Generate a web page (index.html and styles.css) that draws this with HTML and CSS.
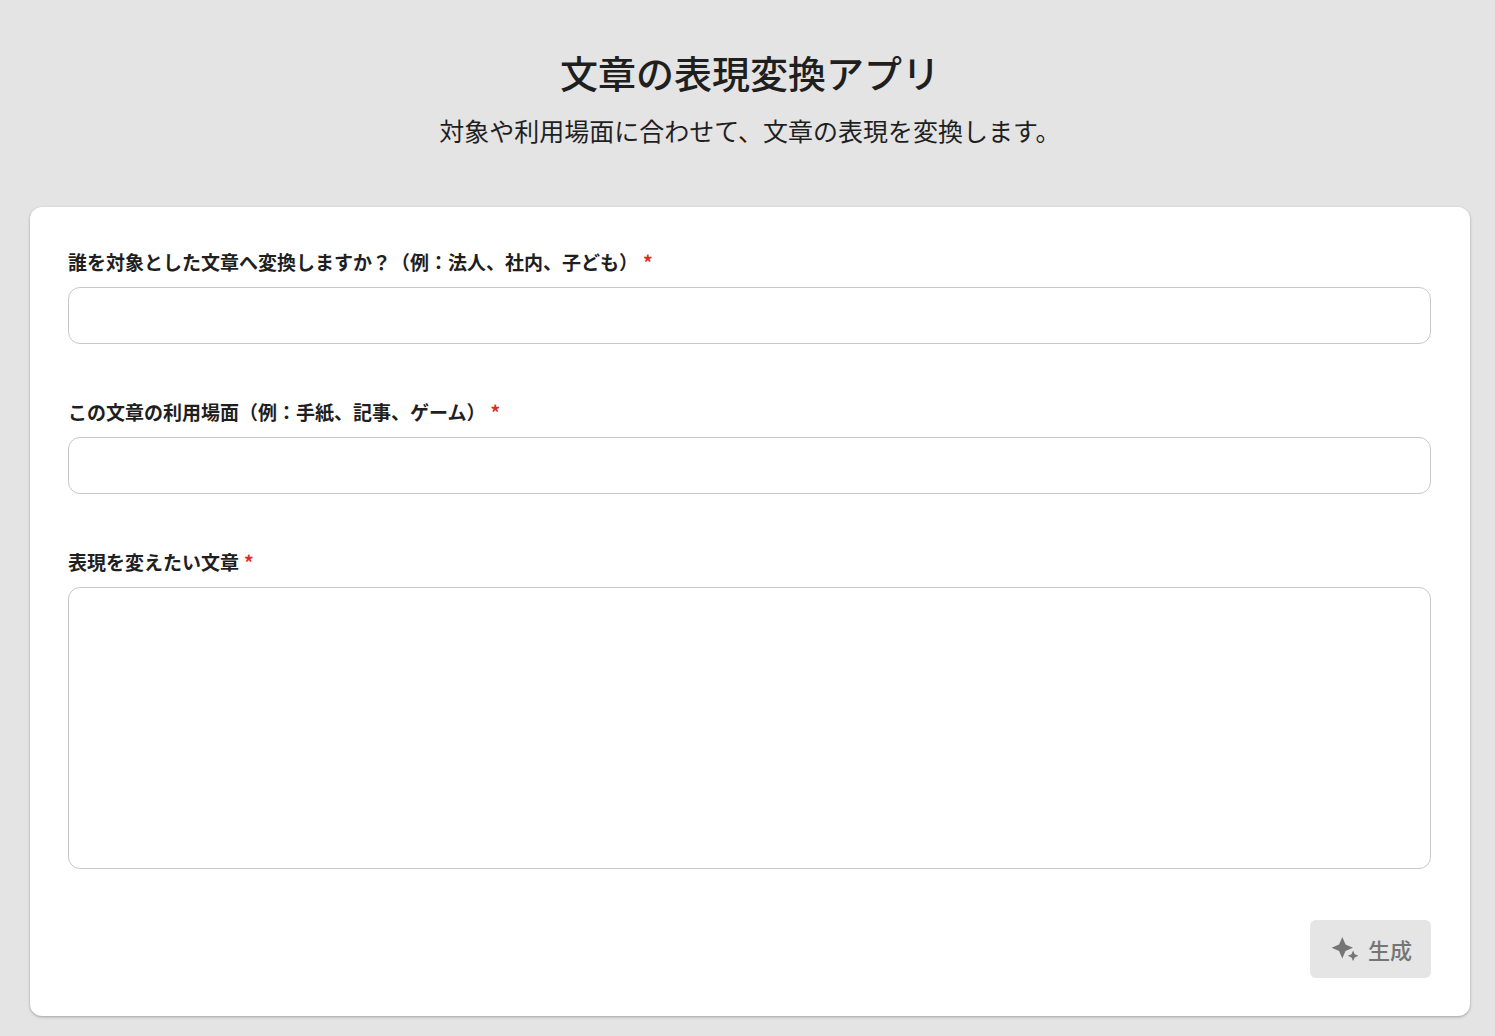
FILE: index.html
```html
<!DOCTYPE html>
<html lang="ja">
<head>
  <meta charset="utf-8">
  <meta name="viewport" content="width=device-width, initial-scale=1">
  <title>文章の表現変換アプリ</title>
  <link rel="stylesheet" href="styles.css">
</head>
<body>
  <header class="page-header">
    <h1 class="page-title">文章の表現変換アプリ</h1>
    <p class="page-lead">対象や利用場面に合わせて、文章の表現を変換します。</p>
  </header>
  <main>
    <form class="card">
      <div class="field">
        <label class="field-label" for="audience">誰を対象とした文章へ変換しますか？（例：法人、社内、子ども）<span class="required">*</span></label>
        <input class="control" type="text" id="audience" required>
      </div>
      <div class="field">
        <label class="field-label" for="scene">この文章の利用場面（例：手紙、記事、ゲーム）<span class="required">*</span></label>
        <input class="control" type="text" id="scene" required>
      </div>
      <div class="field">
        <label class="field-label" for="source">表現を変えたい文章<span class="required">*</span></label>
        <textarea class="control control-multiline" id="source" required></textarea>
      </div>
      <button class="generate" type="submit" disabled>
        <svg class="generate-icon" viewBox="0 0 30 30" aria-hidden="true">
          <path d="M13.3 3.1L16.5 10.6L24 13.8L16.5 17L13.3 24.5L10.1 17L2.6 13.8L10.1 10.6Z"/>
          <path d="M24.1 16.4L25.7 20.2L29.4 21.8L25.7 23.4L24.1 27.2L22.5 23.4L18.8 21.8L22.5 20.2Z"/>
        </svg>
        <span>生成</span>
      </button>
    </form>
  </main>
</body>
</html>
```

FILE: styles.css
```css
*,
*::before,
*::after {
  box-sizing: border-box;
}

body {
  margin: 0;
  padding: 46px 25px 20px 30px;
  background: #e4e4e4;
  color: #1f1f1f;
  font-family: "Noto Sans CJK JP", sans-serif;
}

.page-header {
  margin-bottom: 57px;
  text-align: center;
}

.page-title {
  margin: 0 0 12px;
  font-size: 38px;
  font-weight: 500;
  line-height: 52px;
}

.page-lead {
  margin: 0;
  font-size: 25px;
  line-height: 40px;
}

.card {
  display: flex;
  flex-direction: column;
  gap: 51px;
  padding: 38px 39px 38px 38px;
  border-radius: 12px;
  background: #fff;
  box-shadow: 0 1px 3px rgba(0, 0, 0, 0.3);
}

.field {
  display: flex;
  flex-direction: column;
  gap: 8px;
}

.field-label {
  font-size: 19px;
  font-weight: 700;
  line-height: 34px;
}

.required {
  margin-left: 5px;
  color: #d93025;
}

.control {
  width: 100%;
  height: 57px;
  padding: 12px 18px;
  border: 1px solid #c8c8c8;
  border-radius: 12px;
  background: #fff;
  color: inherit;
  font: inherit;
  font-size: 19px;
}

.control-multiline {
  display: block;
  height: 282px;
  resize: none;
}

.generate {
  display: flex;
  align-items: center;
  align-self: flex-end;
  gap: 9px;
  height: 58px;
  padding: 0 19px;
  border: 0;
  border-radius: 6px;
  background: #e5e5e5;
  color: #757575;
  font-family: inherit;
  font-size: 22px;
  font-weight: 500;
}

.generate-icon {
  width: 30px;
  height: 30px;
  fill: currentColor;
}
```
